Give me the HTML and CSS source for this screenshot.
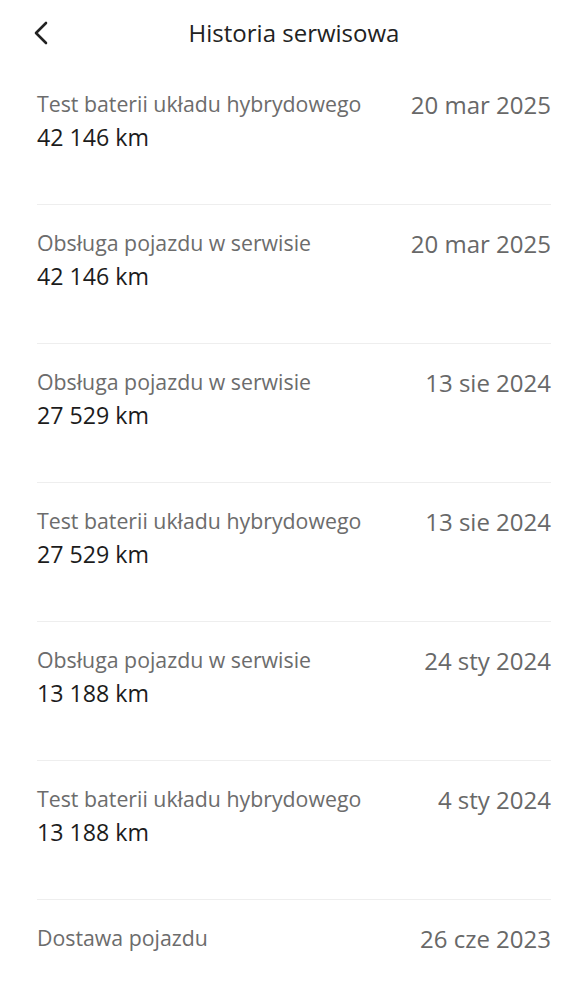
FILE: index.html
```html
<!DOCTYPE html>
<html lang="pl">

<head>
  <meta charset="UTF-8">
  <meta name="viewport" content="width=device-width, initial-scale=1.0">
  <title>Historia serwisowa</title>
  <link rel="stylesheet" href="styles.css">
</head>

<body>
  <header class="topbar">
    <button class="topbar__back" aria-label="Wstecz">
      <svg width="18" height="26" viewBox="0 0 18 26">
        <path d="M14 3 L4 13 L14 23" fill="none" stroke="#222" stroke-width="2.6" stroke-linecap="round" stroke-linejoin="round" />
      </svg>
    </button>
    <h1 class="topbar__title">Historia serwisowa</h1>
  </header>

  <ul class="history">
    <li class="history__item">
      <div class="history__main">
        <span class="history__name">Test baterii układu hybrydowego</span>
        <span class="history__km">42 146 km</span>
      </div>
      <span class="history__date">20 mar 2025</span>
    </li>
    <li class="history__item">
      <div class="history__main">
        <span class="history__name">Obsługa pojazdu w serwisie</span>
        <span class="history__km">42 146 km</span>
      </div>
      <span class="history__date">20 mar 2025</span>
    </li>
    <li class="history__item">
      <div class="history__main">
        <span class="history__name">Obsługa pojazdu w serwisie</span>
        <span class="history__km">27 529 km</span>
      </div>
      <span class="history__date">13 sie 2024</span>
    </li>
    <li class="history__item">
      <div class="history__main">
        <span class="history__name">Test baterii układu hybrydowego</span>
        <span class="history__km">27 529 km</span>
      </div>
      <span class="history__date">13 sie 2024</span>
    </li>
    <li class="history__item">
      <div class="history__main">
        <span class="history__name">Obsługa pojazdu w serwisie</span>
        <span class="history__km">13 188 km</span>
      </div>
      <span class="history__date">24 sty 2024</span>
    </li>
    <li class="history__item">
      <div class="history__main">
        <span class="history__name">Test baterii układu hybrydowego</span>
        <span class="history__km">13 188 km</span>
      </div>
      <span class="history__date">4 sty 2024</span>
    </li>
    <li class="history__item">
      <div class="history__main">
        <span class="history__name">Dostawa pojazdu</span>
      </div>
      <span class="history__date">26 cze 2023</span>
    </li>
  </ul>
</body>

</html>
```

FILE: styles.css
```css
html {
  box-sizing: border-box;
}

*,
*::before,
*::after {
  box-sizing: inherit;
}

body {
  margin: 0;
  background: #fff;
  font-family: "Open Sans", Lato, sans-serif;
  color: #1c1c1c;
}

ul {
  list-style: none;
  margin: 0;
  padding: 0;
}

/* Top bar */

.topbar {
  position: relative;
  height: 66px;
  padding-top: 18px;
  display: flex;
  align-items: flex-start;
  justify-content: center;
}

.topbar__back {
  position: absolute;
  left: 32px;
  top: 20px;
  border: 0;
  padding: 0;
  background: transparent;
  width: 18px;
  height: 26px;
  display: block;
}

.topbar__back svg {
  display: block;
}

.topbar__title {
  margin: 0;
  font-size: 24px;
  line-height: 30px;
  font-weight: 400;
  color: #222;
}

/* History list */

.history {
  padding: 0 37px;
}

.history__item {
  display: flex;
  justify-content: space-between;
  align-items: flex-start;
  padding: 24px 0 52px;
  border-bottom: 1px solid #eeeeee;
}

.history__item:last-child {
  border-bottom: 0;
}

.history__main {
  display: flex;
  flex-direction: column;
  gap: 4px;
}

.history__name {
  font-size: 21.3px;
  line-height: 28px;
  color: #6c6c6c;
}

.history__km {
  font-size: 23.2px;
  line-height: 30px;
  color: #1c1c1c;
}

.history__date {
  font-size: 24px;
  line-height: 30px;
  color: #686868;
}
```
